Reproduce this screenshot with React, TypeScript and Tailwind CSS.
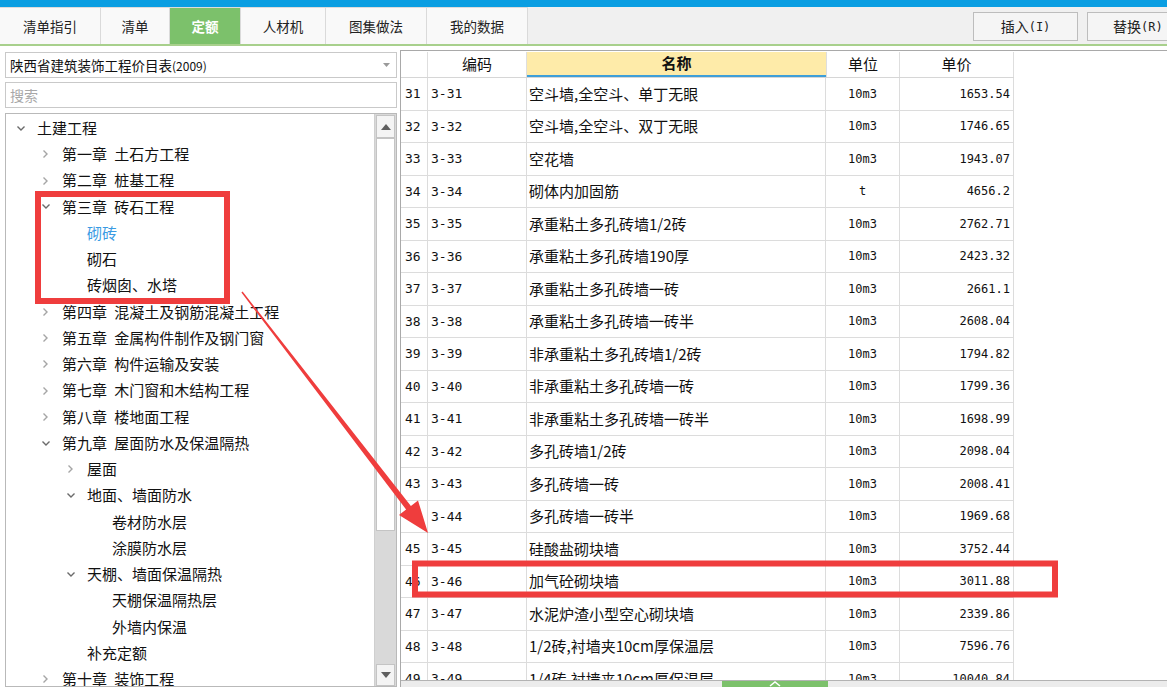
import React from "react";

type TreeItem = { lvl: number; chev: "down" | "right" | "none"; text: string; blue?: boolean };

const tree: TreeItem[] = [
  { lvl: 0, chev: "down", text: "土建工程" },
  { lvl: 1, chev: "right", text: "第一章 土石方工程" },
  { lvl: 1, chev: "right", text: "第二章 桩基工程" },
  { lvl: 1, chev: "down", text: "第三章 砖石工程" },
  { lvl: 2, chev: "none", text: "砌砖", blue: true },
  { lvl: 2, chev: "none", text: "砌石" },
  { lvl: 2, chev: "none", text: "砖烟囱、水塔" },
  { lvl: 1, chev: "right", text: "第四章 混凝土及钢筋混凝土工程" },
  { lvl: 1, chev: "right", text: "第五章 金属构件制作及钢门窗" },
  { lvl: 1, chev: "right", text: "第六章 构件运输及安装" },
  { lvl: 1, chev: "right", text: "第七章 木门窗和木结构工程" },
  { lvl: 1, chev: "right", text: "第八章 楼地面工程" },
  { lvl: 1, chev: "down", text: "第九章 屋面防水及保温隔热" },
  { lvl: 2, chev: "right", text: "屋面" },
  { lvl: 2, chev: "down", text: "地面、墙面防水" },
  { lvl: 3, chev: "none", text: "卷材防水层" },
  { lvl: 3, chev: "none", text: "涂膜防水层" },
  { lvl: 2, chev: "down", text: "天棚、墙面保温隔热" },
  { lvl: 3, chev: "none", text: "天棚保温隔热层" },
  { lvl: 3, chev: "none", text: "外墙内保温" },
  { lvl: 2, chev: "none", text: "补充定额" },
  { lvl: 1, chev: "right", text: "第十章 装饰工程" },
];

const pads = ["pl-[8px]", "pl-[33px]", "pl-[58px]", "pl-[83px]"];

const rows: [string, string, string, string, string][] = [
  ["31", "3-31", "空斗墙,全空斗、单丁无眼", "10m3", "1653.54"],
  ["32", "3-32", "空斗墙,全空斗、双丁无眼", "10m3", "1746.65"],
  ["33", "3-33", "空花墙", "10m3", "1943.07"],
  ["34", "3-34", "砌体内加固筋", "t", "4656.2"],
  ["35", "3-35", "承重粘土多孔砖墙1/2砖", "10m3", "2762.71"],
  ["36", "3-36", "承重粘土多孔砖墙190厚", "10m3", "2423.32"],
  ["37", "3-37", "承重粘土多孔砖墙一砖", "10m3", "2661.1"],
  ["38", "3-38", "承重粘土多孔砖墙一砖半", "10m3", "2608.04"],
  ["39", "3-39", "非承重粘土多孔砖墙1/2砖", "10m3", "1794.82"],
  ["40", "3-40", "非承重粘土多孔砖墙一砖", "10m3", "1799.36"],
  ["41", "3-41", "非承重粘土多孔砖墙一砖半", "10m3", "1698.99"],
  ["42", "3-42", "多孔砖墙1/2砖", "10m3", "2098.04"],
  ["43", "3-43", "多孔砖墙一砖", "10m3", "2008.41"],
  ["44", "3-44", "多孔砖墙一砖半", "10m3", "1969.68"],
  ["45", "3-45", "硅酸盐砌块墙", "10m3", "3752.44"],
  ["46", "3-46", "加气砼砌块墙", "10m3", "3011.88"],
  ["47", "3-47", "水泥炉渣小型空心砌块墙", "10m3", "2339.86"],
  ["48", "3-48", "1/2砖,衬墙夹10cm厚保温层", "10m3", "7596.76"],
  ["49", "3-49", "1/4砖,衬墙夹10cm厚保温层", "10m3", "10040.84"],
];

const tabs = [
  { t: "清单指引", w: "w-[101px]" },
  { t: "清单", w: "w-[69px]" },
  { t: "定额", w: "w-[71px]", active: true },
  { t: "人材机", w: "w-[85px]" },
  { t: "图集做法", w: "w-[101px]" },
  { t: "我的数据", w: "w-[101px]" },
];

function Chevron({ dir }: { dir: "down" | "right" | "none" }) {
  if (dir === "down")
    return (
      <svg width="10" height="7" viewBox="0 0 10 7">
        <path d="M1.5 1.5 L5 5 L8.5 1.5" fill="none" stroke="#6b6b6b" strokeWidth="1.4" />
      </svg>
    );
  if (dir === "right")
    return (
      <svg width="7" height="10" viewBox="0 0 7 10">
        <path d="M1.5 1.5 L5 5 L1.5 8.5" fill="none" stroke="#a5a5a5" strokeWidth="1.4" />
      </svg>
    );
  return null;
}

export default function App() {
  return (
    <div className="relative w-[1167px] h-[687px] overflow-hidden bg-white text-[#111] font-['Noto_Sans_CJK_SC',sans-serif]">
      {/* blue top */}
      <div className="h-[7px] bg-[#0a9ee2]" />
      {/* tab bar */}
      <div className="flex h-[39px] bg-[#f0f0f0] border-b-2 border-[#a8d08c]">
        <div className="flex border-t border-[#dcdcdc]">
          {tabs.map((tb) => (
            <div
              key={tb.t}
              className={`${tb.w} flex items-center justify-center text-[13.5px] border-r border-[#dadada] ${
                tb.active ? "bg-[#7cc16b] text-white font-bold" : "bg-[#f9f9f9] text-[#222]"
              }`}
            >
              {tb.t}
            </div>
          ))}
        </div>
        <div className="flex-1" />
        <div className="flex items-start pt-[5px] gap-[9px]">
          <div className="w-[105px] h-[29px] flex items-center justify-center border border-[#bdbdbd] bg-[#f5f5f5] text-[14px] text-[#222]">
            插入<span className="font-['DejaVu_Sans_Mono',monospace] text-[12px]">(I)</span>
          </div>
          <div className="w-[80px] h-[29px] flex items-center justify-start pl-[25px] border border-r-0 border-[#bdbdbd] bg-[#f5f5f5] text-[14px] text-[#222] whitespace-nowrap">
            替换<span className="font-['DejaVu_Sans_Mono',monospace] text-[12px]">(R)</span>
          </div>
        </div>
      </div>

      {/* content */}
      <div className="flex h-[641px]">
        {/* left panel */}
        <div className="w-[400px] pl-[5px] pr-[3px] pt-[6px] flex flex-col">
          <div className="h-[26px] border border-[#c9c9c9] flex items-center pl-[4px] pr-[6px] text-[13.5px] text-[#111]">
            <span className="flex-1 whitespace-nowrap">
              陕西省建筑装饰工程价目表<span className="text-[12px]">(2009)</span>
            </span>
            <svg width="7" height="4" viewBox="0 0 7 4">
              <path d="M0 0 L7 0 L3.5 4 Z" fill="#9a9a9a" />
            </svg>
          </div>
          <div className="mt-[4px] h-[26px] border border-[#c9c9c9] flex items-center pl-[4px] text-[14px] text-[#a8a8a8]">
            搜索
          </div>
          <div className="mt-[5px] flex-1 border border-[#b9b9b9] flex min-h-0">
            <div className="flex-1 overflow-hidden pt-[1px]">
              {tree.map((it, i) => (
                <div
                  key={i}
                  className={`h-[26.25px] flex items-center whitespace-nowrap text-[15px] [word-spacing:4px] ${pads[it.lvl]}`}
                >
                  <span className="w-[13px] flex items-center justify-center mr-[10px]">
                    <Chevron dir={it.chev} />
                  </span>
                  <span className={it.blue ? "text-[#3a9be3]" : "text-[#111]"}>{it.text}</span>
                </div>
              ))}
            </div>
            {/* scrollbar */}
            <div className="w-[22px] border-l border-[#cfcfcf] bg-[#d9d9d9] flex flex-col">
              <div className="h-[23px] bg-[#f4f4f4] border border-[#c4c4c4] mx-[1px] mt-[1px] flex items-center justify-center">
                <svg width="10" height="6" viewBox="0 0 10 6">
                  <path d="M0 6 L5 0 L10 6 Z" fill="#5f5f5f" />
                </svg>
              </div>
              <div className="h-[393px] bg-white border border-[#c4c4c4] mx-[1px]" />
              <div className="flex-1" />
              <div className="h-[22px] bg-[#f4f4f4] border border-[#c4c4c4] mx-[1px] flex items-center justify-center">
                <svg width="10" height="6" viewBox="0 0 10 6">
                  <path d="M0 0 L10 0 L5 6 Z" fill="#5f5f5f" />
                </svg>
              </div>
            </div>
          </div>
        </div>

        {/* right panel */}
        <div className="flex-1 mt-[4px] border-t border-l border-[#a9a9a9] flex flex-col min-w-0">
          <div className="flex-1 overflow-hidden pt-[1px]">
            <div className="w-[613px]">
              {/* header */}
              <div className="grid grid-cols-[27px_99px_299px_74px_114px] h-[26px] border-b border-[#d6d6d6] text-[15px]">
                <div className="border-r border-[#dedede]" />
                <div className="border-r border-[#dedede] flex items-center justify-center">编码</div>
                <div className="bg-[#feeba9] border-b-2 border-[#3d9fd9] flex items-center justify-center font-bold">
                  名称
                </div>
                <div className="border-r border-l border-[#dedede] flex items-center justify-center">单位</div>
                <div className="border-r border-[#dedede] flex items-center justify-center">单价</div>
              </div>
              {rows.map((r) => (
                <div
                  key={r[0]}
                  className="grid grid-cols-[27px_99px_299px_74px_114px] h-[32.5px] border-b border-[#dcdcdc] text-[15px]"
                >
                  <div className="border-r border-[#dcdcdc] flex items-center pl-[4px] font-['DejaVu_Sans_Mono',monospace] text-[13px]">
                    {r[0]}
                  </div>
                  <div className="border-r border-[#dcdcdc] flex items-center pl-[3px] font-['DejaVu_Sans_Mono',monospace] text-[13px]">
                    {r[1]}
                  </div>
                  <div className="border-r border-[#dcdcdc] flex items-center pl-[2px] whitespace-nowrap">{r[2]}</div>
                  <div className="border-r border-[#dcdcdc] flex items-center justify-center font-['DejaVu_Sans_Mono',monospace] text-[12px]">
                    {r[3]}
                  </div>
                  <div className="border-r border-[#dcdcdc] flex items-center justify-end pr-[3px] font-['DejaVu_Sans_Mono',monospace] text-[12px]">
                    {r[4]}
                  </div>
                </div>
              ))}
            </div>
          </div>
          <div className="h-[7px] border-t border-[#b3b3b3] bg-[#ececec] flex">
            <div className="ml-[321px] w-[106px] h-full bg-[#7cc16b] flex items-start justify-center">
              <svg width="12" height="6" viewBox="0 0 12 6">
                <path d="M1 5 L6 1 L11 5" fill="none" stroke="#ffffff" strokeWidth="1.6" />
              </svg>
            </div>
          </div>
        </div>
      </div>

      {/* annotation overlay */}
      <svg
        className="absolute inset-0 pointer-events-none"
        width="1167"
        height="687"
        viewBox="0 0 1167 687"
      >
        <rect x="38" y="194" width="189" height="107" fill="none" stroke="#ef3d3d" strokeWidth="6" />
        <rect x="415" y="563.5" width="640" height="31" fill="none" stroke="#ef3d3d" strokeWidth="6" />
        <polygon
          points="242.6,291.6 410.9,505.9 418,500.4 428,533 399,515 406.1,509.5 241.4,292.4"
          fill="#ef3d3d"
        />
      </svg>
    </div>
  );
}
